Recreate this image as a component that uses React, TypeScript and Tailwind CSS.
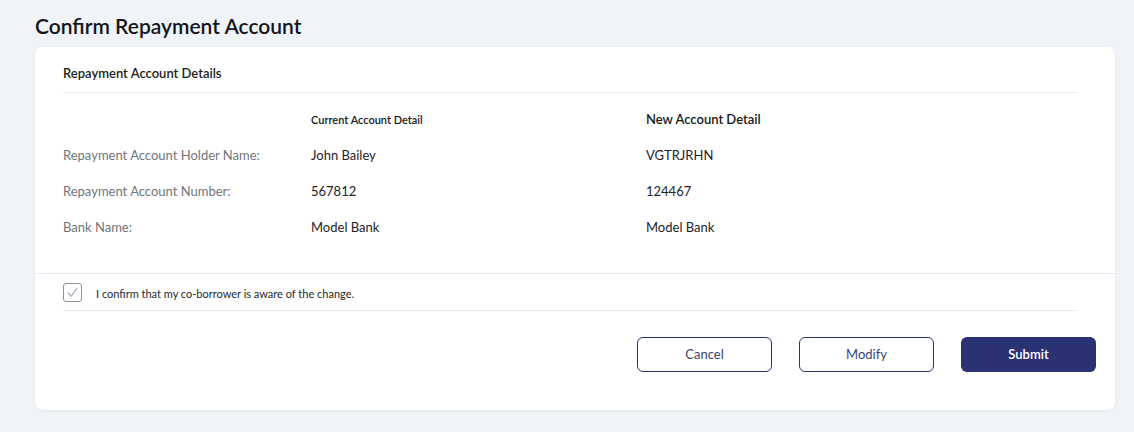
import React from "react";

const font = { fontFamily: '"Lato", "Noto Sans", sans-serif' };

const rows = [
  ["Repayment Account Holder Name:", "John Bailey", "VGTRJRHN"],
  ["Repayment Account Number:", "567812", "124467"],
  ["Bank Name:", "Model Bank", "Model Bank"],
];

export default function App() {
  return (
    <div
      className="min-h-[432px] w-full bg-[#f0f3f7] pl-[35px] pr-[19px] pt-[12px] pb-[22px]"
      style={font}
    >
      <h1 className="text-[21px] leading-[28px] font-semibold text-[#12161c]">
        Confirm Repayment Account
      </h1>
      <div className="mt-[7px] h-[363px] rounded-lg bg-white shadow-[0_1px_4px_rgba(30,40,70,0.06)] flex flex-col">
        <div className="pl-[28px] pr-[38px]">
          <div className="pt-[17px] pb-[10px] border-b border-[#e3e7ee] text-[13px] leading-[18px] font-semibold text-[#1a1d22]">
            Repayment Account Details
          </div>
          <div className="pt-[9px] pb-[27px] grid grid-cols-[248px_335px_1fr] auto-rows-[36px] items-center text-[13px] text-[#1f2227]">
            <div />
            <div className="text-[11px] font-semibold text-[#15181d]">Current Account Detail</div>
            <div className="text-[13px] font-semibold text-[#15181d]">New Account Detail</div>
            {rows.map((r) => (
              <React.Fragment key={r[0]}>
                <div className="text-[#72757a]">{r[0]}</div>
                <div>{r[1]}</div>
                <div>{r[2]}</div>
              </React.Fragment>
            ))}
          </div>
        </div>
        <div className="border-t border-[#e3e7ee]" />
        <div className="pl-[28px] pr-[38px]">
          <label className="h-[37px] flex items-center gap-[14px] border-b border-[#e3e7ee]">
            <span className="w-[19px] h-[19px] rounded-[3px] border border-[#8c8f96] flex items-center justify-center">
              <svg width="13" height="13" viewBox="0 0 12 12" fill="none">
                <path d="M2 6.5 L4.8 9.3 L10 2.5" stroke="#a9a6c0" strokeWidth="1.1" strokeLinecap="round" strokeLinejoin="round" />
              </svg>
            </span>
            <span className="text-[11px] text-[#25282d] pt-[4px]">
              I confirm that my co-borrower is aware of the change.
            </span>
          </label>
        </div>
        <div className="mt-[26px] pr-[19px] flex justify-end gap-[27px]">
          <button className="w-[135px] h-[35px] rounded-[6px] border border-[#2b3175] text-[13px] text-[#3a3f73] bg-white">
            Cancel
          </button>
          <button className="w-[135px] h-[35px] rounded-[6px] border border-[#2b3175] text-[13px] text-[#3a3f73] bg-white">
            Modify
          </button>
          <button className="w-[135px] h-[35px] rounded-[6px] bg-[#2b3175] text-[13px] font-semibold text-white">
            Submit
          </button>
        </div>
      </div>
    </div>
  );
}
